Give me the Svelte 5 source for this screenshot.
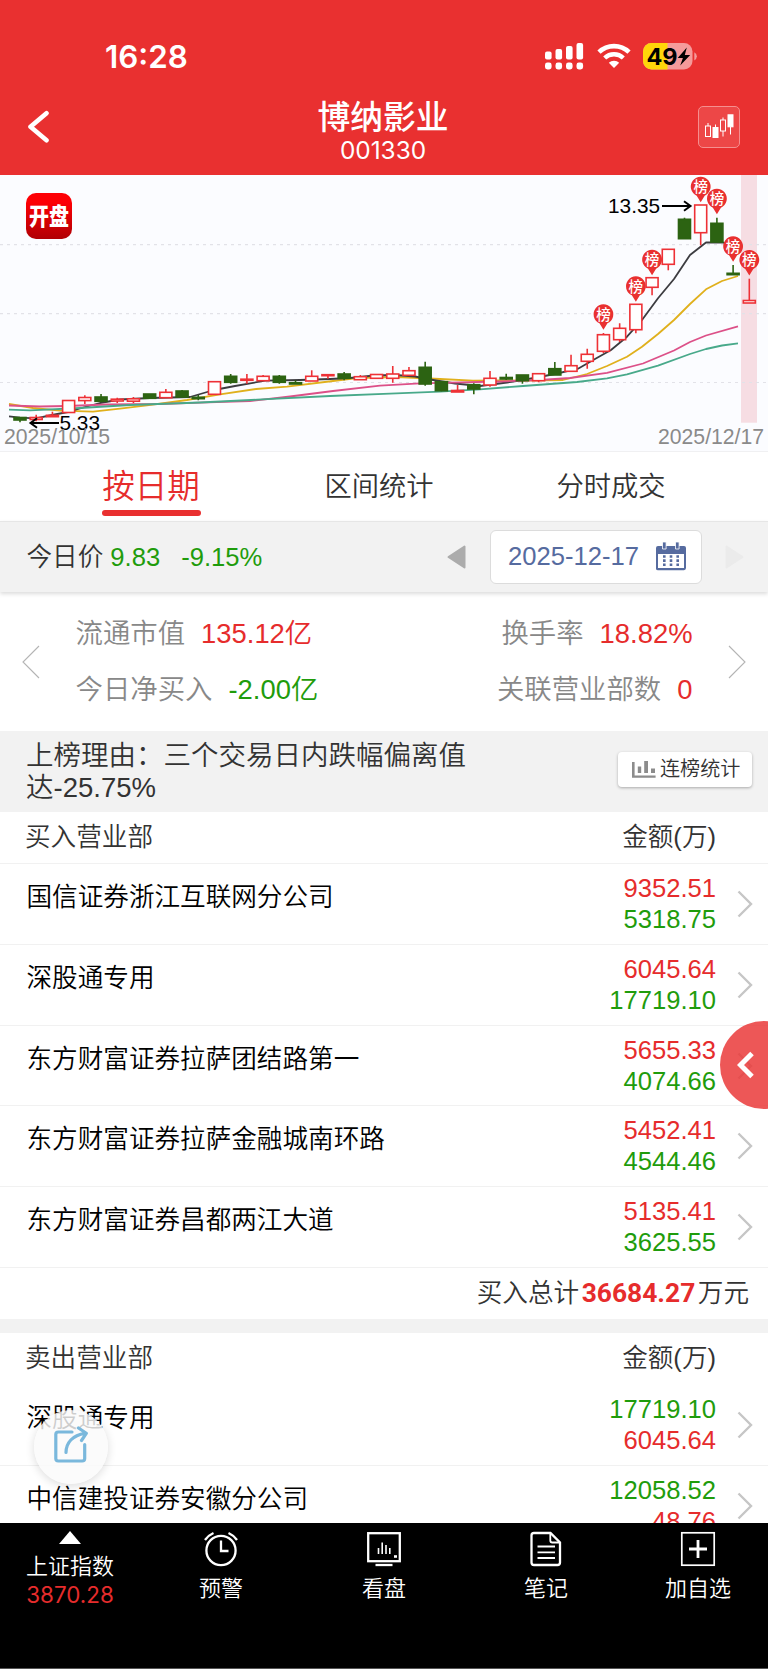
<script>
  const STEP = 16.207;
  const x = (i) => 20 + i * STEP;

  // kind, high, top, bottom, low
  const candles = [
    ['down', 242.5, 242.5, 245, 247.3],
    ['up', 239.7, 242.5, 244.5, 246.3],
    ['up', 236.7, 240.3, 241.7, 241.7],
    ['up', 225.5, 225.5, 237.5, 237.5],
    ['up', 220.3, 222.5, 225.6, 229],
    ['down', 219, 222, 226.3, 227.3],
    ['up', 222.7, 224.2, 226, 228],
    ['up', 222, 223.8, 226.2, 228],
    ['down', 219, 219, 223.3, 223.3],
    ['up', 214, 217.3, 222.7, 222.7],
    ['down', 215, 216, 222, 222],
    ['down', 220, 222.3, 223.7, 225.3],
    ['up', 206.7, 206.7, 219.3, 219.3],
    ['down', 199, 201.3, 207.3, 208.7],
    ['up', 199, 204.2, 205.3, 208.7],
    ['up', 200, 201.3, 205.7, 205.7],
    ['down', 200, 201.3, 207.3, 208.7],
    ['down', 205.3, 207.7, 209, 209],
    ['up', 195.3, 201.3, 206, 206],
    ['up', 199.3, 199.7, 200.7, 203.7],
    ['down', 197, 199, 203.3, 205.3],
    ['up', 200, 201.7, 204.7, 204.7],
    ['up', 199.5, 199.5, 203.3, 203.3],
    ['up', 191, 199, 203.3, 207.7],
    ['up', 192, 195.7, 200.3, 200.3],
    ['down', 186.7, 192.3, 209, 210.7],
    ['down', 206.7, 206.7, 215.7, 216.3],
    ['up', 210, 215.5, 217, 217],
    ['down', 208.3, 209.7, 214, 219.3],
    ['up', 196, 203.3, 210, 211.7],
    ['down', 198.7, 202.5, 204, 205],
    ['down', 200, 200, 205.7, 208.7],
    ['up', 198.7, 198.7, 205.7, 207.3],
    ['down', 187, 193.7, 200, 200],
    ['up', 179.7, 190.7, 196.3, 196.3],
    ['up', 173.7, 179.3, 186.3, 193.7],
    ['up', 158, 159.7, 176.3, 178],
    ['up', 148.3, 153.3, 164.7, 167],
    ['up', 129.3, 129.3, 154.7, 158.3],
    ['up', 102.7, 102.7, 112.3, 120.3],
    ['up', 74.3, 74.3, 89.3, 95.3],
    ['down', 42.7, 44.3, 63.7, 63.7],
    ['up', 30, 30, 57.7, 70.3],
    ['down', 42.7, 48.3, 67, 67],
    ['down', 90, 98.3, 99.7, 99.7],
    ['up', 103.7, 125.5, 128, 128],
  ];

  const averages = [
    { color: '#e0b01c', points: '9,229 33,233 60,235.7 93,236.7 120,233.7 147,230.3 187,225 220,219.3 256,214 287,211.7 333,206 357,203 397,202 440,204 473,205.7 500,205.3 523,205.7 563,205 587,199 607,191 627,181.7 642,171.7 658,159 674,145 690,129 706,114.3 722,106 738,101' },
    { color: '#3c3c40', points: '9,241.3 20,242.7 36,243.3 52,240 68,237 85,232 100,228 120,224.5 150,223 190,222 214,215 235,211 265,205.7 300,205 330,204 350,203 374,200.5 395,200 415,201.5 430,204.5 455,208.5 480,211 507,207.5 523,205 555,199 578,193.7 595,184 611,175 627,161.7 642,145 658,123.3 674,104 690,80 706,67.5 722,67.3 737,71' },
    { color: '#dc5088', points: '9,230.5 40,231.5 67,231 107,229.5 160,229 200,227.7 250,226 290,221.5 333,216 380,210.7 420,208.3 450,207.7 500,206.5 540,205 570,203 607,197.8 643,188.5 674,175.5 690,167 706,160.5 738,151.3' },
    { color: '#48a98a', points: '9,234.7 30,235.3 80,233 130,230 200,227.5 257,224.7 330,221 390,218.7 440,216.7 480,214.3 523,211 577,207 607,203.3 627,199.3 658,190.7 690,179 706,174 722,170.5 738,168.3' },
  ];

  // candle index and centre of the badge
  const pins = [
    [36, 139.3],
    [38, 111.3],
    [39, 84.7],
    [42, 11.7],
    [43, 23.7],
    [44, 71.3],
    [45, 85],
  ];

  const tabs = ['按日期', '区间统计', '分时成交'];
  let active = $state(0);

  const buyers = [
    { name: '国信证券浙江互联网分公司', buy: '9352.51', sell: '5318.75' },
    { name: '深股通专用', buy: '6045.64', sell: '17719.10' },
    { name: '东方财富证券拉萨团结路第一', buy: '5655.33', sell: '4074.66' },
    { name: '东方财富证券拉萨金融城南环路', buy: '5452.41', sell: '4544.46' },
    { name: '东方财富证券昌都两江大道', buy: '5135.41', sell: '3625.55' },
  ];

  const sellers = [
    { name: '深股通专用', buy: '6045.64', sell: '17719.10' },
    { name: '中信建投证券安徽分公司', buy: '48.76', sell: '12058.52' },
  ];
</script>

{#snippet chevron()}
  <svg class="chevron" width="16" height="28" viewBox="0 0 16 28">
    <path d="M1.5 1.5 L14 14 L1.5 26.5" fill="none" stroke="#c6c6c6" stroke-width="2.4" />
  </svg>
{/snippet}

<div class="app">
  <header>
    <div class="status">
      <span class="time">16:28</span>
      <div class="indicators">
        <svg width="39" height="27" viewBox="0 0 39 27" fill="#fff">
          <rect x="0" y="8.5" width="6.6" height="8" rx="2" />
          <rect x="10.5" y="6" width="6.6" height="10.5" rx="2" />
          <rect x="21" y="3" width="6.6" height="13.5" rx="2" />
          <rect x="31.5" y="0" width="6.6" height="16.5" rx="2" />
          {#each [0, 10.5, 21, 31.5] as dot}
            <rect x={dot} y="19.5" width="6.6" height="7" rx="2.4" />
          {/each}
        </svg>
        <svg class="wifi" width="34" height="26" viewBox="0 0 34 26" fill="none" stroke="#fff">
          <path d="M2 9.2 A21.5 21.5 0 0 1 32 9.2" stroke-width="4.6" />
          <path d="M7.7 15 A13.5 13.5 0 0 1 26.3 15" stroke-width="4.4" />
          <path d="M17 25 L11.8 19.8 A7.4 7.4 0 0 1 22.2 19.8 Z" fill="#fff" stroke="none" />
        </svg>
        <svg width="54" height="27" viewBox="0 0 54 27">
          <defs>
            <clipPath id="cell"><rect width="49.5" height="26.5" rx="8.5" /></clipPath>
          </defs>
          <g clip-path="url(#cell)">
            <rect width="50" height="27" fill="#f59a9a" />
            <rect width="24.5" height="27" fill="#ffd60a" />
          </g>
          <path d="M51.3 9.2 a4.6 4.6 0 0 1 0 8.2 z" fill="#f59a9a" />
          <text x="3.6" y="21.6" class="charge">49</text>
          <path d="M43.8 4.6 L34.7 14.9 H39.9 L37.2 22.6 L47.2 12 H41.8 Z" fill="#000" />
        </svg>
      </div>
    </div>
    <div class="title-bar">
      <svg width="24" height="34" viewBox="0 0 24 34">
        <path d="M20.5 3.2 L4.5 16.8 L20.5 30.2" fill="none" stroke="#fff" stroke-width="4.6" stroke-linecap="round" stroke-linejoin="round" />
      </svg>
      <div class="stock">
        <h1>博纳影业</h1>
        <p>001330</p>
      </div>
      <button class="kline" aria-label="K线">
        <svg width="30" height="26" viewBox="0 0 30 26" fill="none" stroke="#fff">
          <path d="M4 9V12 M11.5 10.5V13 M19 3.5V6 M19 17V22.5 M26.5 13V20.5" />
          <rect x="1.5" y="12" width="5" height="10.5" />
          <rect x="9" y="13.5" width="5" height="10" fill="#fff" />
          <rect x="16.5" y="6" width="5" height="11" />
          <rect x="24" y="0.8" width="5" height="12" fill="#fff" />
        </svg>
      </button>
    </div>
  </header>

  <section class="chart">
    <svg width="768" height="276" viewBox="0 0 768 276">
      <rect x="741" y="0" width="16" height="247.7" fill="#f6dde3" />
      {#each [69.7, 138.7, 207.5] as y}
        <line x1="0" x2="768" y1={y} y2={y} stroke="#e2e2e8" stroke-width="1.2" stroke-dasharray="3 4" />
      {/each}

      {#each averages as line}
        <polyline points={line.points} fill="none" stroke={line.color} stroke-width="1.8" stroke-linejoin="round" />
      {/each}

      {#each candles as [kind, high, top, bottom, low], i}
        <g class={kind}>
          <path d="M{x(i)} {high}V{top} M{x(i)} {bottom}V{low}" />
          <rect x={x(i) - 6} y={top} width="12" height={bottom - top} />
        </g>
      {/each}

      {#each pins as [i, y]}
        <g transform="translate({x(i)} {y})">
          <path d="M0 15.5 L-4 9 A9.9 9.9 0 1 1 4 9 Z" fill="#e93030" />
          <text class="pin" y="5.2">榜</text>
        </g>
      {/each}

      <text x="608" y="38.3">13.35</text>
      <path class="arrow" d="M662 31H690 M684 26.3L690.5 31L684 35.7" />
      <text x="59.5" y="255">5.33</text>
      <path class="arrow" d="M59 248H31 M37 243.3L30.5 248L37 252.7" />
      <text class="date" x="4" y="268.6">2025/10/15</text>
      <text class="date" x="658" y="268.6">2025/12/17</text>
    </svg>
    <svg class="badge" width="46" height="46" viewBox="0 0 46 46">
      <defs>
        <linearGradient id="red" x2="0" y2="1">
          <stop offset="0.2" stop-color="#fd0005" />
          <stop offset="1" stop-color="#b00004" />
        </linearGradient>
      </defs>
      <rect width="46" height="46" rx="10" fill="url(#red)" />
      <text x="23" y="26" transform="scale(1 1.22)">开盘</text>
    </svg>
  </section>

  <nav class="tabs">
    {#each tabs as tab, i}
      <button class:active={active === i} onclick={() => (active = i)}><span>{tab}</span></button>
    {/each}
  </nav>

  <section class="price-bar">
    <p>今日价<span class="price">9.83</span><span class="change">-9.15%</span></p>
    <svg class="prev" width="19" height="24" viewBox="0 0 19 24">
      <path d="M17.5 1.5 V22.5 L1.5 12 Z" fill="#acacac" stroke="#acacac" stroke-width="2" stroke-linejoin="round" />
    </svg>
    <button class="picker">
      2025-12-17
      <svg width="30" height="29" viewBox="0 0 30 29" fill="#566b9f">
        <path d="M2 4 H28 a2 2 0 0 1 2 2 V26 a2.3 2.3 0 0 1 -2 2.3 H2 a2 2 0 0 1 -2 -2.3 V6 a2 2 0 0 1 2 -2 Z M2 12 V26 H28 V12 Z" fill-rule="evenodd" />
        <path d="M6.5 0 h3.6 v7 h-3.6 z M19.5 0 h3.6 v7 h-3.6 z" stroke="#fff" stroke-width="0.8" />
        {#each [13.2, 17.3, 21.4] as y}
          <path d="M7 {y}h2.6v2.6h-2.6z M13.7 {y}h2.6v2.6h-2.6z M20.4 {y}h2.6v2.6h-2.6z" />
        {/each}
      </svg>
    </button>
    <svg class="next" width="19" height="24" viewBox="0 0 19 24">
      <path d="M1.5 1.5 V22.5 L17.5 12 Z" fill="#ebebeb" stroke="#ebebeb" stroke-width="2" stroke-linejoin="round" />
    </svg>
  </section>

  <section class="metrics">
    <svg width="18" height="34" viewBox="0 0 18 34">
      <path d="M17 1 L1 17 L17 33" fill="none" stroke="#b4b4b4" stroke-width="1.1" />
    </svg>
    <dl>
      <div><dt>流通市值</dt><dd class="red">135.12亿</dd></div>
      <div><dt>换手率</dt><dd class="red">18.82%</dd></div>
      <div><dt>今日净买入</dt><dd class="green">-2.00亿</dd></div>
      <div><dt>关联营业部数</dt><dd class="red">0</dd></div>
    </dl>
    <svg width="18" height="34" viewBox="0 0 18 34">
      <path d="M1 1 L17 17 L1 33" fill="none" stroke="#b4b4b4" stroke-width="1.1" />
    </svg>
  </section>

  <section class="reason">
    <p>上榜理由：三个交易日内跌幅偏离值达-25.75%</p>
    <button>
      <svg width="24" height="17" viewBox="0 0 24 17" fill="#8c8c8c">
        <path d="M0 1h2.6v13.4h21v2.4H0z M5.8 5.5h3.4v6.5h-3.4z M12.2 0h3.8v12h-3.8z M19 7.5h4v4.5h-4z" />
      </svg>
      连榜统计
    </button>
  </section>

  <section class="seats">
    <div class="head"><span>买入营业部</span><span>金额(万)</span></div>
    {#each buyers as row}
      <div class="row">
        <span class="name">{row.name}</span>
        <div class="amounts">
          <span class="red">{row.buy}</span>
          <span class="green">{row.sell}</span>
        </div>
        {@render chevron()}
      </div>
    {/each}
    <div class="total">买入总计<strong>36684.27</strong>万元</div>
  </section>

  <section class="seats sellers">
    <div class="head"><span>卖出营业部</span><span>金额(万)</span></div>
    {#each sellers as row}
      <div class="row">
        <span class="name">{row.name}</span>
        <div class="amounts">
          <span class="green">{row.sell}</span>
          <span class="red">{row.buy}</span>
        </div>
        {@render chevron()}
      </div>
    {/each}
  </section>

  <button class="drawer" aria-label="展开">
    <svg width="18" height="28" viewBox="0 0 18 28">
      <path d="M15 2.5 L3.5 14 L15 25.5" fill="none" stroke="#fff" stroke-width="5" />
    </svg>
  </button>

  <button class="share" aria-label="分享">
    <svg width="36" height="38" viewBox="0 0 36 38" fill="none" stroke="#7ab8dc" stroke-width="3.2" stroke-linecap="round" stroke-linejoin="round">
      <path d="M19 6 H5.3 a2.5 2.5 0 0 0 -2.5 2.5 V32.5 a2.5 2.5 0 0 0 2.5 2.5 H29.2 a2.5 2.5 0 0 0 2.5 -2.5 V18.5" />
      <path d="M13 26.5 C13 17 19.5 9 32 7.3 M25.5 2 L33.3 7.3 L28.5 14.5" />
    </svg>
  </button>

  <footer>
    <div class="index">
      <svg width="22" height="13" viewBox="0 0 22 13"><path d="M11 0 L22 13 H0 Z" fill="#fff" /></svg>
      <span>上证指数</span>
      <b>3870.28</b>
    </div>
    <div class="item">
      <svg width="36" height="36" viewBox="0 0 36 36" fill="none" stroke="#fff" stroke-width="2.3">
        <circle cx="18" cy="19.5" r="14.6" />
        <path d="M18 9.5 V20 H25.5 M2 9 Q5 4.5 10.5 2 M34 9 Q31 4.5 25.5 2" />
      </svg>
      <span>预警</span>
    </div>
    <div class="item">
      <svg width="36" height="36" viewBox="0 0 36 36" fill="none" stroke="#fff" stroke-width="2.3">
        <rect x="2.2" y="2.2" width="31.6" height="28" />
        <path d="M9.5 34 H26.5" />
        <path d="M12.5 17 V23 M16.2 11.5 V23 M20 14 V23 M23.8 17 V23" stroke-width="1.6" />
        <path d="M28 25.5 h3" stroke-width="2.6" />
      </svg>
      <span>看盘</span>
    </div>
    <div class="item">
      <svg width="36" height="36" viewBox="0 0 36 36" fill="none" stroke="#fff" stroke-width="2.3">
        <path d="M6 2 H22.5 L32 11.5 V31.5 a2.5 2.5 0 0 1 -2.5 2.5 H6 a2.5 2.5 0 0 1 -2.5 -2.5 V4.5 A2.5 2.5 0 0 1 6 2 Z" />
        <path d="M22.3 2 V9.5 a2 2 0 0 0 2 2 H31.5 M9.5 15.5 H27 M9.5 21.3 H27 M9.5 27 H27" stroke-width="1.8" />
      </svg>
      <span>笔记</span>
    </div>
    <div class="item">
      <svg width="36" height="36" viewBox="0 0 36 36" fill="none" stroke="#fff">
        <rect x="1.8" y="1.8" width="32.4" height="32.4" stroke-width="1.7" />
        <path d="M9 18 H27 M18 9 V27" stroke-width="2.8" />
      </svg>
      <span>加自选</span>
    </div>
  </footer>
</div>

<style>
  :global(body) {
    margin: 0;
    background: #fff;
  }

  .app {
    position: relative;
    width: 768px;
    height: 1669px;
    overflow: hidden;
    background: #fff;
    color: #333;
    font-family: "Liberation Sans", "Noto Sans CJK SC", sans-serif;
    font-size: 25.6px;
    font-weight: 350;
  }

  * {
    box-sizing: border-box;
  }

  button {
    border: none;
    padding: 0;
    background: none;
    color: inherit;
    font: inherit;
  }

  svg {
    display: block;
    flex: none;
  }

  h1,
  p,
  dl,
  dd {
    margin: 0;
  }

  .red {
    color: #e62c2c;
  }

  .green {
    color: #1f9c0c;
  }

  /* HEADER */
  header {
    height: 175px;
    background: #e93030;
    color: #fff;
  }

  .status {
    display: flex;
    justify-content: space-between;
    height: 100px;
    padding: 37px 71px 0 105px;
  }

  .time {
    font: 600 31.3px/41px Inter, sans-serif;
  }

  .indicators {
    display: flex;
    gap: 12.5px;
    padding-top: 6px;
  }

  .charge {
    font: 700 23.5px Inter, sans-serif;
    letter-spacing: -0.3px;
  }

  .title-bar {
    display: flex;
    justify-content: space-between;
    padding: 0 28px 0 26px;
  }

  .title-bar > svg {
    margin: 10px 18px 0 0;
  }

  .stock {
    padding-top: 1px;
    text-align: center;
  }

  h1 {
    font-size: 32.8px;
    font-weight: 500;
    line-height: 34px;
  }

  .stock p {
    font: 400 24.4px/30px Inter, sans-serif;
  }

  .kline {
    display: flex;
    align-items: center;
    justify-content: center;
    width: 42px;
    height: 42px;
    margin-top: 6px;
    border: 1px solid #f58f8f;
    border-radius: 5px;
    background: #ed4747;
  }

  /* CHART */
  .chart {
    position: relative;
    height: 277px;
    border-bottom: 1px solid #f0f0f2;
    background: #fbfcff;
  }

  .chart text {
    font-size: 20.8px;
    font-weight: 400;
  }

  .chart .date {
    fill: #8a8a8a;
    font-size: 21.2px;
  }

  .chart .pin {
    fill: #fff;
    font-size: 14.5px;
    font-weight: 500;
    text-anchor: middle;
  }

  .up {
    fill: #fff;
    stroke: #ee3136;
    stroke-width: 1.6;
  }

  .down {
    fill: #2c6312;
    stroke: #2c6312;
    stroke-width: 1.6;
  }

  .arrow {
    fill: none;
    stroke: #000;
    stroke-width: 2;
  }

  .badge {
    position: absolute;
    top: 18px;
    left: 26px;
  }

  .chart .badge text {
    fill: #fff;
    font-size: 20px;
    font-weight: 900;
    text-anchor: middle;
  }

  /* TABS */
  .tabs {
    display: grid;
    grid-template-columns: 228px 228px 236px;
    height: 69px;
    padding-left: 37px;
    font-size: 27.3px;
  }

  .tabs button {
    display: flex;
    flex-direction: column;
    align-items: center;
    line-height: 69px;
  }

  .tabs span {
    height: 58px;
  }

  .tabs .active {
    color: #e62c2c;
    font-size: 32.6px;
  }

  .active::after {
    content: "";
    width: 99px;
    height: 5.5px;
    border-radius: 3px;
    background: #e93030;
  }

  /* PRICE */
  .price-bar {
    position: relative;
    display: flex;
    align-items: center;
    height: 71px;
    padding: 0 24px 0 26.5px;
    border-top: 1px solid #e6e6e6;
    background: #f2f2f2;
    box-shadow: 0 2px 4px rgba(0, 0, 0, 0.14);
  }

  .price-bar p {
    line-height: 70px;
  }

  .price,
  .change {
    color: #1f9c0c;
  }

  .price {
    margin: 0 21px 0 7px;
  }

  .prev {
    margin-left: auto;
  }

  .picker {
    display: flex;
    align-items: center;
    gap: 17px;
    width: 212px;
    height: 54px;
    margin: 0 23px 0 24px;
    padding: 0 0 1px 17px;
    border: 1.5px solid #dcdcdc;
    border-radius: 6px;
    background: #fff;
    color: #566b9f;
    white-space: nowrap;
  }

  /* METRICS */
  .metrics {
    display: flex;
    align-items: center;
    justify-content: space-between;
    height: 139px;
    padding: 0 22px;
    font-size: 27.4px;
  }

  dl {
    display: grid;
    grid-template-columns: auto auto;
    justify-content: space-between;
    width: 617px;
    line-height: 56px;
  }

  dl div {
    display: flex;
    gap: 16px;
  }

  dl div:nth-child(even) {
    justify-content: flex-end;
  }

  dt {
    color: #888;
  }

  /* REASON */
  .reason {
    display: flex;
    justify-content: space-between;
    height: 81px;
    padding: 9px 16px 0 26px;
    background: #f2f2f2;
    font-size: 27.5px;
    line-height: 31.5px;
  }

  .reason p {
    width: 450px;
  }

  .reason button {
    display: flex;
    align-items: center;
    gap: 4px;
    width: 134px;
    height: 35px;
    margin-top: 12px;
    padding-left: 14px;
    border-radius: 4px;
    background: #fff;
    box-shadow: 0 1px 3px rgba(0, 0, 0, 0.3);
    font-size: 20.1px;
    white-space: nowrap;
  }

  /* SEATS */
  .head {
    display: flex;
    justify-content: space-between;
    padding: 0 52px 0 25px;
    line-height: 51px;
  }

  .row {
    display: flex;
    height: 80.8px;
    padding: 0 15.5px 0 26.5px;
    border-top: 1px solid #f1f1f1;
  }

  .name {
    flex: 1;
    padding-top: 18px;
    color: #000;
    line-height: 31px;
  }

  .amounts {
    display: grid;
    align-content: start;
    padding-top: 9px;
    line-height: 31px;
    text-align: right;
  }

  .chevron {
    margin: 26px 0 0 20.5px;
  }

  .total {
    height: 52px;
    padding-right: 19px;
    border-top: 1px solid #f1f1f1;
    line-height: 51px;
    text-align: right;
  }

  strong {
    margin: 0 2.5px;
    color: #e62c2c;
    font-family: Roboto, sans-serif;
    font-size: 26.4px;
    font-weight: 700;
  }

  .sellers {
    border-top: 14px solid #f2f2f2;
  }

  .sellers .head + .row {
    border-top-color: transparent;
  }

  /* FLOATING BUTTONS */
  .drawer {
    position: absolute;
    top: 1021px;
    right: -40px;
    width: 88px;
    height: 88px;
    padding-left: 17px;
    border-radius: 50%;
    background: rgba(234, 58, 58, 0.85);
  }

  .share {
    position: absolute;
    top: 1410px;
    left: 34px;
    display: flex;
    align-items: center;
    justify-content: center;
    width: 74px;
    height: 74px;
    padding-bottom: 4px;
    border-radius: 50%;
    background: rgba(250, 250, 250, 0.82);
    box-shadow: 0 2px 10px rgba(0, 0, 0, 0.14);
  }

  /* FOOTER */
  footer {
    position: absolute;
    bottom: 0;
    left: 0;
    display: grid;
    grid-template-columns: 140px 162px 164px 160px 144px;
    width: 768px;
    height: 146px;
    border-bottom: 1px solid #555;
    background: #000;
    color: #fff;
    font-size: 22px;
  }

  .index,
  .item {
    display: flex;
    flex-direction: column;
    align-items: center;
  }

  .index {
    padding-top: 8px;
  }

  .index span {
    margin-top: 8px;
    line-height: 30px;
  }

  b {
    color: #e62c2c;
    font: 400 22.4px/26px Inter, sans-serif;
  }

  .item {
    padding-top: 8px;
  }

  .item span {
    margin-top: 7px;
    line-height: 30px;
  }
</style>
